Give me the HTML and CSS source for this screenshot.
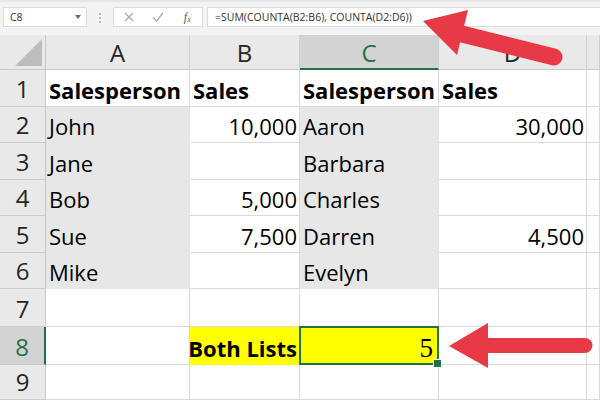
FILE: index.html
```html
<!DOCTYPE html>
<html>
<head>
<meta charset="utf-8">
<title>Excel COUNTA</title>
<link rel="stylesheet" href="styles.css">
</head>
<body>
<div class="app">
  <div class="toolbar">
    <div class="namebox"><span>C8</span><span class="caret"></span></div>
    <div class="dots"><i></i><i></i><i></i></div>
    <div class="btnbox">
      <span class="slot"><svg width="10" height="10" viewBox="0 0 10 10"><path d="M1 1L9 9M9 1L1 9" stroke="#a9a9a9" stroke-width="1.2" fill="none"/></svg></span>
      <span class="slot"><svg width="12" height="10" viewBox="0 0 12 10"><path d="M1 5.5L4.5 9L11 1" stroke="#a9a9a9" stroke-width="1.2" fill="none"/></svg></span>
      <span class="slot fx"><i>f</i><span class="sx">x</span></span>
    </div>
    <div class="fbox">=SUM(COUNTA(B2:B6), COUNTA(D2:D6))</div>
  </div>

  <div class="sheet">
    <div class="corner"><svg width="28" height="28" viewBox="0 0 28 28"><path d="M27 0V27H0Z" fill="#bdbdbd"/></svg></div>
    <div class="ch">A</div>
    <div class="ch">B</div>
    <div class="ch chs">C</div>
    <div class="ch">D</div>
    <div class="ch"></div>

    <div class="rh">1</div>
    <div class="c b">Salesperson</div>
    <div class="c b">Sales</div>
    <div class="c b">Salesperson</div>
    <div class="c b">Sales</div>
    <div class="c"></div>

    <div class="rh">2</div>
    <div class="c g">John</div>
    <div class="c r">10,000</div>
    <div class="c g">Aaron</div>
    <div class="c r">30,000</div>
    <div class="c"></div>

    <div class="rh">3</div>
    <div class="c g">Jane</div>
    <div class="c r"></div>
    <div class="c g">Barbara</div>
    <div class="c r"></div>
    <div class="c"></div>

    <div class="rh">4</div>
    <div class="c g">Bob</div>
    <div class="c r">5,000</div>
    <div class="c g">Charles</div>
    <div class="c r"></div>
    <div class="c"></div>

    <div class="rh">5</div>
    <div class="c g">Sue</div>
    <div class="c r">7,500</div>
    <div class="c g">Darren</div>
    <div class="c r">4,500</div>
    <div class="c"></div>

    <div class="rh">6</div>
    <div class="c g">Mike</div>
    <div class="c r"></div>
    <div class="c g">Evelyn</div>
    <div class="c r"></div>
    <div class="c"></div>

    <div class="rh">7</div>
    <div class="c"></div>
    <div class="c"></div>
    <div class="c"></div>
    <div class="c"></div>
    <div class="c"></div>

    <div class="rh rhs">8</div>
    <div class="c"></div>
    <div class="c r b y">Both Lists</div>
    <div class="c r y active"><span class="num">5</span></div>
    <div class="c"></div>
    <div class="c"></div>

    <div class="rh">9</div>
    <div class="c"></div>
    <div class="c"></div>
    <div class="c"></div>
    <div class="c"></div>
    <div class="c"></div>
  </div>

  <svg class="arrows" width="600" height="400" viewBox="0 0 600 400">
    <path d="M423 21L468 10L457 55Z" fill="#e83947"/>
    <path d="M450 31L554 57" stroke="#e83947" stroke-width="17" stroke-linecap="round" fill="none"/>
    <path d="M449 346L488 323L488 368Z" fill="#e83947"/>
    <path d="M484 345.5L585 345.5" stroke="#e83947" stroke-width="15" stroke-linecap="round" fill="none"/>
  </svg>
</div>
</body>
</html>
```

FILE: styles.css
```css
* {
  box-sizing: border-box;
  margin: 0;
  padding: 0;
}

html, body {
  width: 600px;
  height: 400px;
  overflow: hidden;
  background: #ffffff;
}

body {
  font-family: "Open Sans", "Noto Sans", sans-serif;
}

.app {
  position: relative;
  width: 600px;
  height: 400px;
}

/* formula bar */
.toolbar {
  height: 35px;
  background: #f3f3f3;
  border-top: 2px solid #e6e6e6;
  padding-top: 5px;
  display: flex;
  align-items: flex-start;
}

.namebox {
  margin-left: 3px;
  width: 84px;
  height: 20px;
  background: #ffffff;
  border: 1px solid #dcdcdc;
  display: flex;
  align-items: center;
  justify-content: space-between;
  padding: 0 5px 0 6px;
  font-size: 10.5px;
  color: #333333;
}

.caret {
  width: 0;
  height: 0;
  border-left: 3.5px solid transparent;
  border-right: 3.5px solid transparent;
  border-top: 4px solid #6b6b6b;
}

.dots {
  margin-left: 12px;
  width: 2px;
  padding-top: 6px;
  display: flex;
  flex-direction: column;
  gap: 2px;
}

.dots i {
  display: block;
  width: 2px;
  height: 2px;
  background: #b8b8b8;
}

.btnbox {
  margin-left: 12px;
  width: 90px;
  height: 20px;
  background: #ffffff;
  border: 1px solid #dcdcdc;
  display: flex;
}

.slot {
  width: 29.3px;
  height: 18px;
  display: flex;
  align-items: center;
  justify-content: center;
}

.fx {
  font-family: "Liberation Serif", serif;
  font-size: 12px;
  color: #5a5a5a;
  align-items: center;
}

.fx i {
  font-style: italic;
}

.sx {
  font-style: italic;
  font-size: 8px;
  margin-top: 4px;
}

.fbox {
  margin-left: 4px;
  flex: 1;
  height: 20px;
  background: #ffffff;
  border: 1px solid #dcdcdc;
  border-right: none;
  padding-left: 7px;
  font-size: 10.5px;
  line-height: 18px;
  color: #333333;
  white-space: nowrap;
}

/* grid */
.sheet {
  display: grid;
  grid-template-columns: 46px 144px 110px 139px 148px 13px;
  grid-template-rows: 35px 37px 36px 37px 36px 37px 36px 38px 38px 35px;
}

.corner {
  background: #e9e9e9;
  border-right: 1px solid #c8c8c8;
  border-bottom: 1px solid #c8c8c8;
  display: flex;
  align-items: flex-end;
  justify-content: flex-end;
  padding: 0 2px 2px 0;
}

.ch {
  background: #e9e9e9;
  border-right: 1px solid #d0d0d0;
  border-bottom: 1px solid #c8c8c8;
  display: flex;
  align-items: flex-end;
  justify-content: center;
  font-size: 24px;
  line-height: 24px;
  color: #262626;
  padding-bottom: 4px;
}

.chs {
  background: #d3d3d3;
  color: #217346;
  border-bottom: 2px solid #217346;
  padding-bottom: 3px;
}

.rh {
  background: #e9e9e9;
  border-right: 1px solid #c8c8c8;
  border-bottom: 1px solid #cdcdcd;
  display: flex;
  align-items: flex-end;
  justify-content: center;
  font-size: 24px;
  line-height: 24px;
  color: #262626;
  padding-bottom: 5px;
}

.rhs {
  background: #d3d3d3;
  color: #217346;
  border-right: 2px solid #217346;
}

.c {
  border-right: 1px solid #dadada;
  border-bottom: 1px solid #dadada;
  display: flex;
  align-items: flex-end;
  padding: 0 2px 5px 3px;
  font-size: 22px;
  line-height: 22px;
  color: #000000;
  white-space: nowrap;
}

.r {
  justify-content: flex-end;
}

.b {
  font-weight: 700;
}

.g {
  background: #e7e7e7;
  border-color: #e7e7e7;
}

.y {
  background: #ffff00;
  border-color: #ffff00;
}

.active {
  position: relative;
  padding: 0 5px 2px 3px;
}

.active::after {
  content: "";
  position: absolute;
  left: -1px;
  top: -1px;
  right: -1px;
  bottom: -1px;
  border: 2px solid #217346;
}

.active::before {
  content: "";
  position: absolute;
  right: -4px;
  bottom: -4px;
  width: 7px;
  height: 7px;
  background: #217346;
  border: 1px solid #ffffff;
  z-index: 2;
}

.num {
  font-family: "Liberation Serif", serif;
  font-size: 27px;
  line-height: 27px;
}

.arrows {
  position: absolute;
  left: 0;
  top: 0;
  pointer-events: none;
}
```
